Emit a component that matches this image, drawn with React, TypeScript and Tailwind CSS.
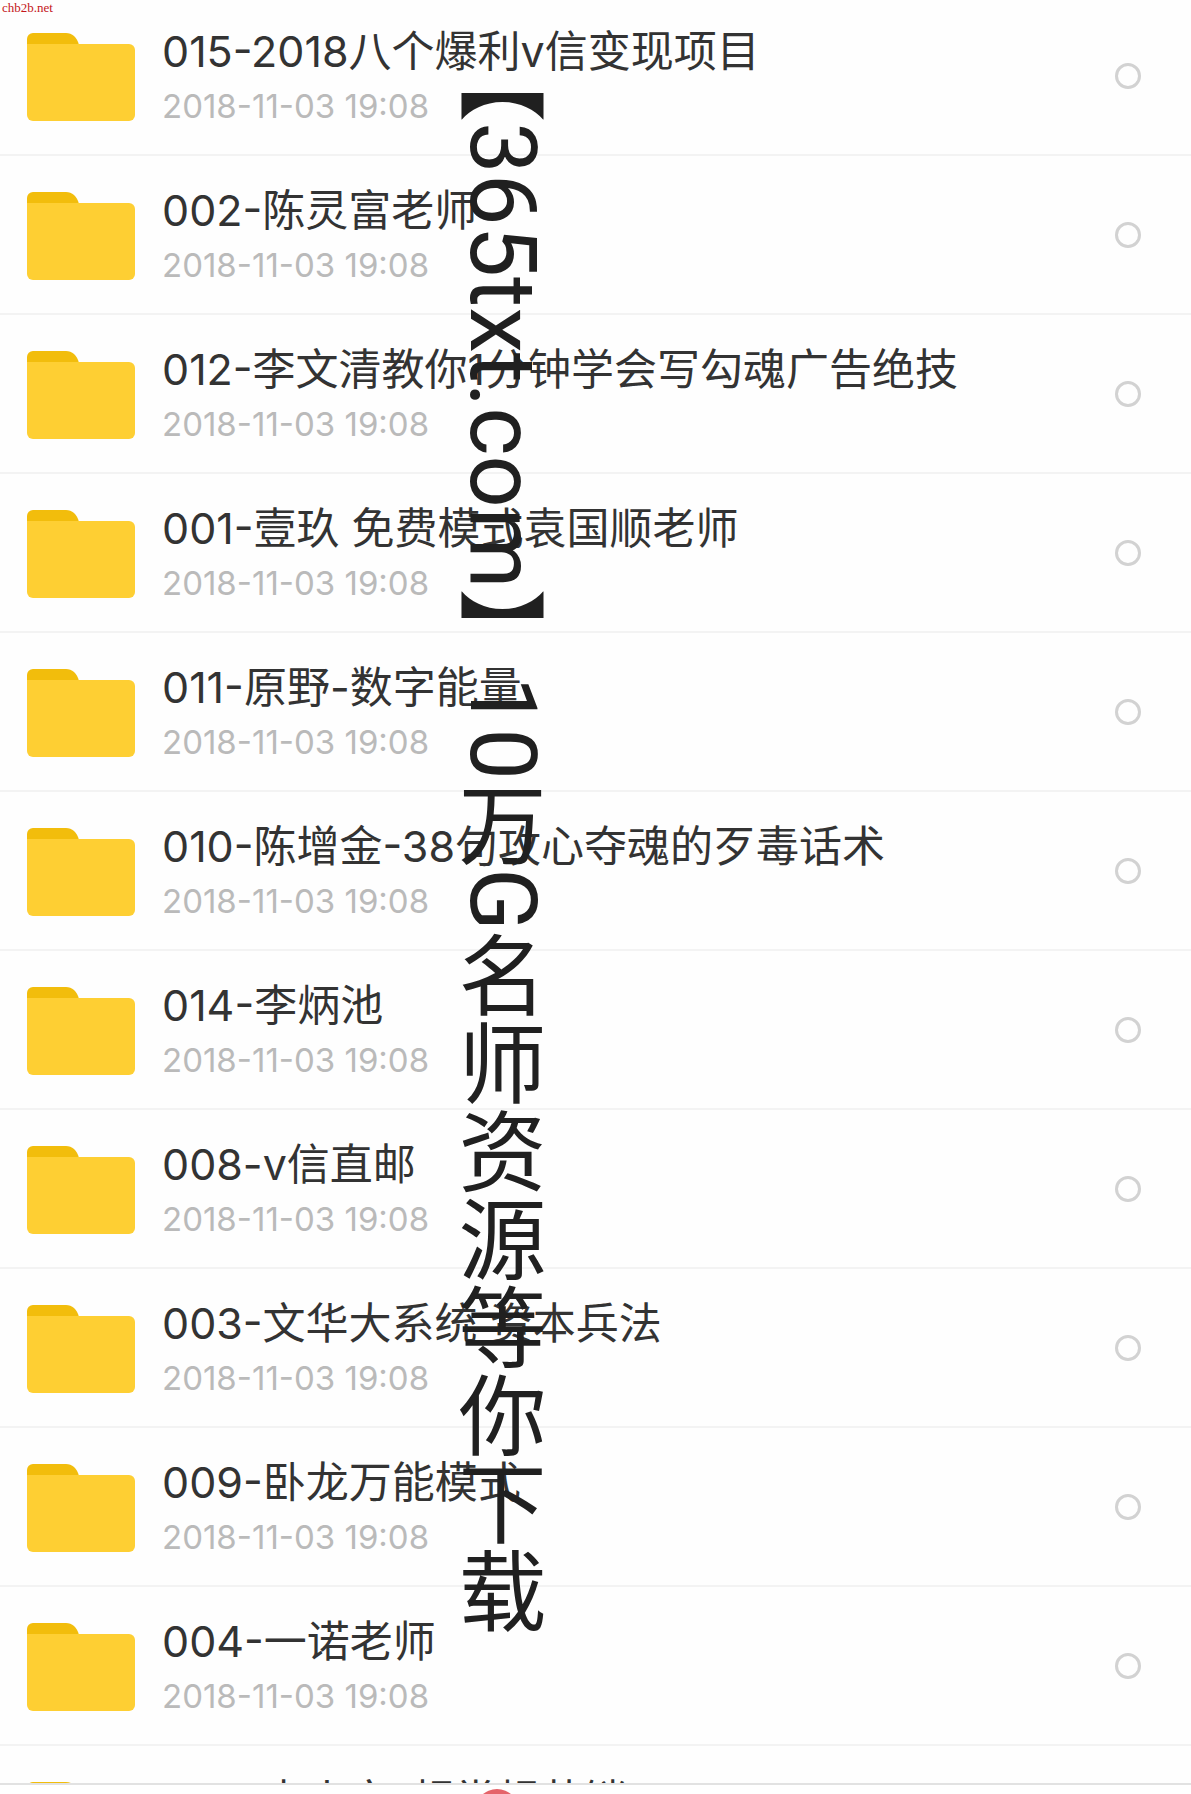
import { useState } from 'react';

interface FolderItem {
  id: string;
  name: string;
  modifiedAt: string;
}

const folders: FolderItem[] = [
  { id: 'f015', name: '015-2018八个爆利v信变现项目', modifiedAt: '2018-11-03 19:08' },
  { id: 'f002', name: '002-陈灵富老师', modifiedAt: '2018-11-03 19:08' },
  { id: 'f012', name: '012-李文清教你1分钟学会写勾魂广告绝技', modifiedAt: '2018-11-03 19:08' },
  { id: 'f001', name: '001-壹玖 免费模式袁国顺老师', modifiedAt: '2018-11-03 19:08' },
  { id: 'f011', name: '011-原野-数字能量', modifiedAt: '2018-11-03 19:08' },
  { id: 'f010', name: '010-陈增金-38句攻心夺魂的歹毒话术', modifiedAt: '2018-11-03 19:08' },
  { id: 'f014', name: '014-李炳池', modifiedAt: '2018-11-03 19:08' },
  { id: 'f008', name: '008-v信直邮', modifiedAt: '2018-11-03 19:08' },
  { id: 'f003', name: '003-文华大系统 资本兵法', modifiedAt: '2018-11-03 19:08' },
  { id: 'f009', name: '009-卧龙万能模式', modifiedAt: '2018-11-03 19:08' },
  { id: 'f004', name: '004-一诺老师', modifiedAt: '2018-11-03 19:08' },
];

const lastFolder: FolderItem = {
  id: 'f005',
  name: '005-李小文-超常规营销',
  modifiedAt: '2018-11-03 19:08',
};

function FolderIcon() {
  return (
    <svg className="w-[108px] h-[90px] shrink-0" viewBox="0 0 108 90" aria-hidden="true">
      <path d="M0 16V8a6 6 0 0 1 6-6h33c6 0 11 4 13 12v4z" fill="#f2bd0c" />
      <path d="M0 13h102a6 6 0 0 1 6 6v65a6 6 0 0 1-6 6H6a6 6 0 0 1-6-6z" fill="#fecf33" />
    </svg>
  );
}

interface FolderRowProps {
  folder: FolderItem;
  checked: boolean;
  onToggle: (id: string) => void;
}

function FolderRow({ folder, checked, onToggle }: FolderRowProps) {
  return (
    <li className="flex items-center h-[159px] pl-[27px] pr-[50px] border-b-2 border-[#f3f3f3]">
      <FolderIcon />
      <label htmlFor={folder.id} className="flex-1 min-w-0 ml-[27px] whitespace-nowrap">
        <span className="block text-[43px] leading-[60px] text-[#333333]">{folder.name}</span>
        <span className="block text-[33px] leading-[50px] text-[#bababa]">{folder.modifiedAt}</span>
      </label>
      <input
        id={folder.id}
        type="checkbox"
        checked={checked}
        onChange={() => onToggle(folder.id)}
        className="appearance-none size-[26px] shrink-0 rounded-full border-3 border-[#d2d2d2] checked:bg-[#fecf33]"
      />
    </li>
  );
}

export default function App() {
  const [selected, setSelected] = useState<string[]>([]);

  const handleToggle = (id: string) => {
    setSelected((prev) => (prev.includes(id) ? prev.filter((item) => item !== id) : [...prev, id]));
  };

  return (
    <div className="relative overflow-hidden bg-[#fefefe] font-['Inter','Noto_Sans_CJK_SC',sans-serif]">
      <ul className="-mt-[3px]">
        {folders.map((folder) => (
          <FolderRow
            key={folder.id}
            folder={folder}
            checked={selected.includes(folder.id)}
            onToggle={handleToggle}
          />
        ))}
      </ul>

      {/* The next row is cut off by the bottom bar */}
      <ul className="h-[37px] overflow-hidden">
        <FolderRow
          folder={lastFolder}
          checked={selected.includes(lastFolder.id)}
          onToggle={handleToggle}
        />
      </ul>
      <footer className="h-[11px] overflow-hidden border-t-2 border-[#e2e2e2] bg-white pl-[475px]">
        <div className="mt-1 size-11 rounded-full bg-[#e5646a]" />
      </footer>

      {/* Watermarks */}
      <span className="absolute left-[2px] top-[1px] font-['Liberation_Serif',serif] text-[13px] leading-[14px] text-[#c4161c]">
        chb2b.net
      </span>
      <p className="absolute left-[456px] top-[34px] pointer-events-none whitespace-nowrap [writing-mode:vertical-rl] font-['Noto_Sans_CJK_SC',sans-serif] text-[88px] leading-[92px] text-[#202020]">
        【
        <span className="font-['Roboto',sans-serif] text-[92px]">365txt.com</span>
        】
        <span className="font-['Roboto',sans-serif] text-[92px]">10</span>
        万
        <span className="font-['Roboto',sans-serif] text-[92px]">G</span>
        名师资源等你下载
      </p>
    </div>
  );
}
